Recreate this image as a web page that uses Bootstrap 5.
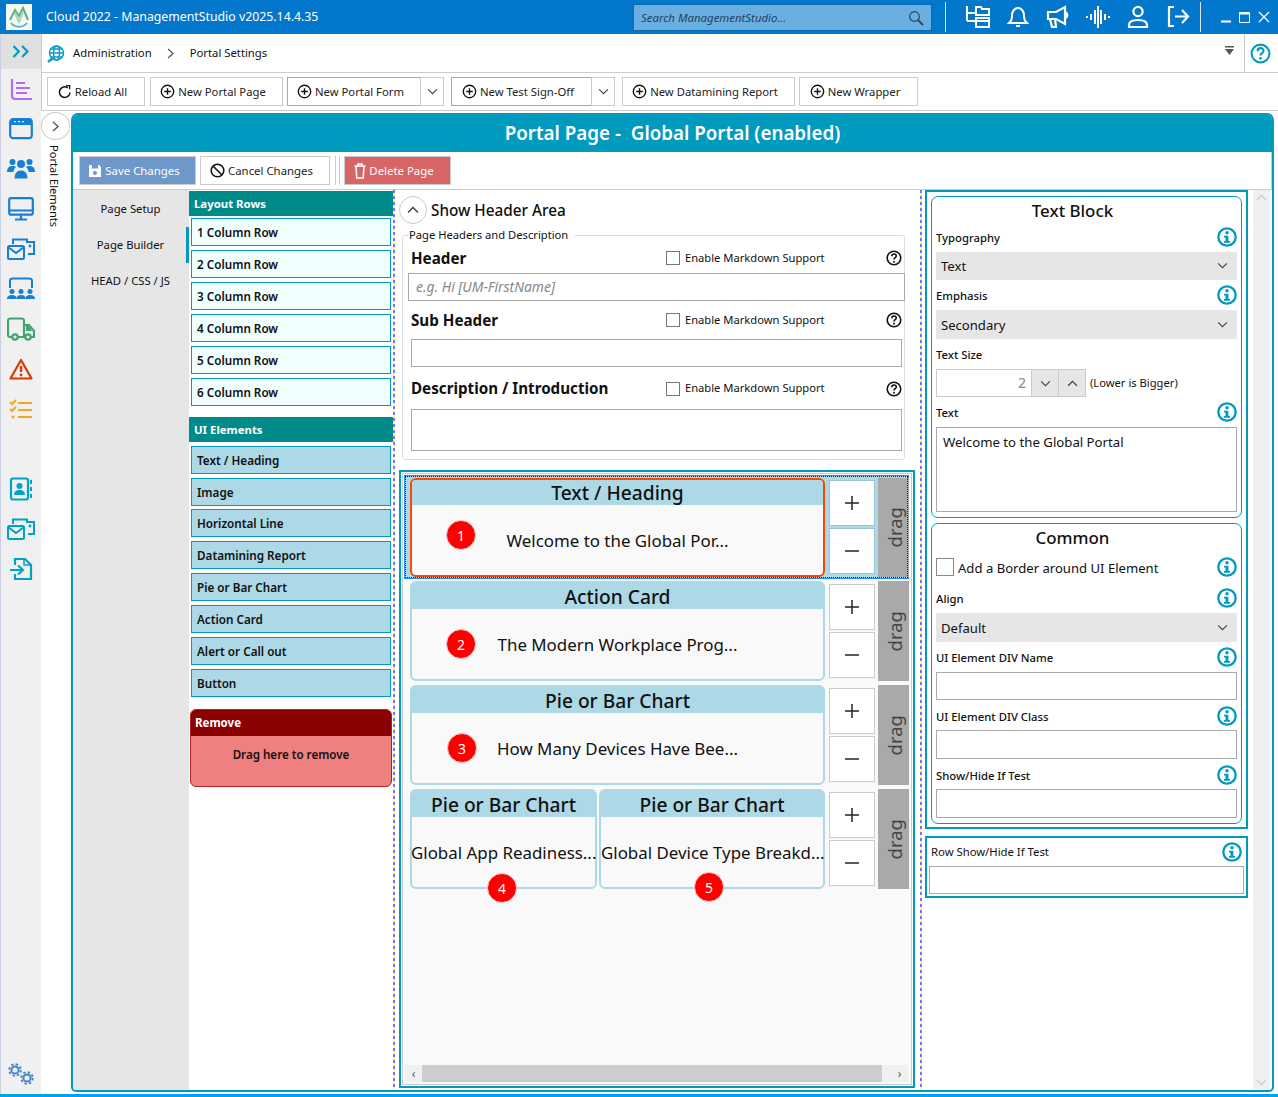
<!doctype html>
<html lang="en">
<head>
<meta charset="utf-8">
<title>ManagementStudio</title>
<link href="https://cdn.jsdelivr.net/npm/bootstrap@5.3.0/dist/css/bootstrap.min.css" rel="stylesheet">
<style>
html,body{height:100%;}
body{width:1278px;height:1097px;overflow:hidden;background:#fff;font-family:"Noto Sans","Open Sans",sans-serif;font-size:11.3px;color:#111;}
.app-shell{height:1094px;}
.title-bar{height:34px;background:#0277cc;color:#fff;flex:none;}
.logo-box{width:26px;height:26px;margin:4px 0 0 6px;background:#f4f8f4;}
.app-name{font-size:12.3px;margin-left:14px;width:587px;line-height:34px;white-space:nowrap;}
.search-box{width:299px;height:27px;margin-top:4px;background:#6aafe2;border:1px solid #0a68ad;padding:0 7px;color:#24435c;font-style:italic;font-size:11.4px;}
.sep-v{width:1px;height:30px;background:#d6e8f6;margin-top:2px;}
.sep-a{margin-left:13px;margin-right:12px;}
.sep-b{margin-left:2px;}
.tb-ico{display:flex;justify-content:center;align-items:center;width:40px;height:34px;}
.win-btns{width:76px;padding-left:20px;gap:8px;height:34px;}
.rail{width:41px;flex:none;background:#f0f0f0;border-left:1px solid #ccd0e4;}
.rail-top{height:35px;background:#e0e0e0;}
.rail-cell{height:40px;}
.rail-gap{height:40px;}
.rail-foot{margin-top:auto;height:40px;padding-left:5px;padding-bottom:8px;}
.crumb-bar{height:39px;border-bottom:1px solid #ccc;border-left:1px solid #ccc;flex:none;padding-left:5px;padding-top:1px;font-size:11.3px;}
.crumb-main{flex:1;}
.crumb-help{width:34px;border-left:1px solid #ccc;height:38px;padding-right:3px;margin-top:-1px;color:#009abf;}
.crumb-sep{margin:0 16px 0 15px;}
.filter-mark{margin-right:10px;margin-top:-6px;}
.tool-bar{height:38px;border-bottom:1px solid #ccc;border-left:1px solid #ccc;flex:none;padding:4px 0 0 5px;gap:4px;}
.tool-btn{--bs-btn-padding-x:0;--bs-btn-padding-y:0;--bs-btn-font-size:11.3px;--bs-btn-border-radius:0;--bs-btn-border-color:#ccc;--bs-btn-bg:#fff;--bs-btn-color:#222;--bs-btn-line-height:1;height:29px;display:flex;align-items:center;justify-content:center;gap:3px;white-space:nowrap;padding-right:7px;}
.tool-btn.w-reload{width:98px;margin-right:1px}.tool-btn.w-page{width:133px}.tool-btn.w-form{width:134px;--bs-btn-border-color:#aaa}.tool-btn.w-test{width:141px;--bs-btn-border-color:#aaa}.tool-btn.w-dm{width:173px}.tool-btn.w-wrap{width:119px}
.tool-btn.w-caret{width:24px;margin-left:-1px;--bs-btn-border-color:#ccc;padding-right:0;}
.split-gap{margin-left:3px;}
.side-strip{width:30px;flex:none;}
.round-btn{width:29px;height:28px;border:1px solid #ccc;border-radius:50%;background:#fff;padding:0;display:flex;align-items:center;justify-content:center;flex:none;}
.strip-btn{margin-top:1px;}
.strip-label{writing-mode:vertical-rl;font-size:11.1px;margin:5px 0 0 5px;line-height:16px;white-space:nowrap;}
.page-panel{width:1203px;height:979px;margin-top:2px;border:2px solid #009abf;border-radius:7px 7px 5px 5px;overflow:hidden;flex:none;background:#fff;}
.panel-head{height:37px;background:#009abf;color:#fff;font-size:18.8px;font-weight:600;text-align:center;line-height:37px;flex:none;white-space:pre;}
.action-bar{height:38px;border-bottom:1px solid #ccc;border-right:1px solid #ccc;padding:4px 0 0 6px;flex:none;gap:4px;}
.act-btn{--bs-btn-padding-x:0;--bs-btn-padding-y:0;--bs-btn-font-size:11.4px;--bs-btn-border-radius:0;--bs-btn-line-height:1;height:29px;display:flex;align-items:center;justify-content:center;gap:3px;white-space:nowrap;padding-right:7px;}
.act-save{width:117px;--bs-btn-bg:#6e98c9;--bs-btn-border-color:#ccc;--bs-btn-color:#fff;}
.act-cancel{width:130px;--bs-btn-bg:#fff;--bs-btn-border-color:#ccc;--bs-btn-color:#222;}
.act-del{width:107px;--bs-btn-bg:#d76565;--bs-btn-border-color:#ccc;--bs-btn-color:#fff;}
.bar-sep{width:5px;height:29px;border-left:1px solid #ccc;border-right:1px solid #ccc;margin-left:1px;}
.tabs-col{width:116px;background:#e6e6e6;flex:none;padding-top:1px;}
.tab-item{height:36px;display:flex;align-items:center;justify-content:center;font-size:11.3px;padding-right:1px;white-space:nowrap;}
.tab-on{box-shadow:inset -3px 0 0 #009abf;}
.tool-col{width:204px;flex:none;padding-top:1px;}
.sec-head{height:25px;color:#fff;font-weight:700;font-size:11.4px;line-height:25px;padding-left:5px;}
.sec-teal{background:#008b8b;}
.azure-list{margin-top:2px;}
.ui-head{margin-top:11px;margin-bottom:4px;}
.drag-item{display:block;height:28px;border:1px solid #009abf;margin:0 2px 4px;padding-left:5px;line-height:27px;font-weight:600;font-size:11.7px;white-space:nowrap;}
.item-azure{background:#f0ffff;}
.item-blue{background:#add8e6;}
.drag-item.tight-b{margin-bottom:3px;}
.remove-box{margin:12px 1px 0;border:1px solid #b22222;border-radius:6px;overflow:hidden;height:78px;background:#f08080;}
.remove-head{height:27px;background:#8b0000;color:#fff;font-weight:700;font-size:11.5px;line-height:28px;padding-left:5px;margin:-1px -1px 0;}
.remove-body{font-weight:600;font-size:11.6px;text-align:center;margin-top:10px;}
.dash-rule{width:2px;flex:none;background:repeating-linear-gradient(#7b74ff 0 3px,#ffff70 3px 6px);}
.mid-col{width:525px;flex:none;}
.show-row{height:45px;padding:6px 0 0 4px;font-size:15.3px;font-weight:500;gap:4px;flex:none;}
.show-btn{width:28px;}
.show-txt{line-height:28px;}
.fs-box{position:relative;margin:0 15px 0 7px;height:225px;flex:none;border:1px solid #d8e0e6;border-radius:3px;padding:0 2px 0 8px;}
.fs-legend{position:absolute;top:-10px;left:5px;background:#fff;padding:0 6px 0 1px;font-size:11.2px;line-height:17px;white-space:nowrap;}
.fs-row{align-items:center;}
.fs-title{width:256px;font-size:15.2px;font-weight:700;white-space:nowrap;}
.fs-check{width:14px;height:14px;border:1px solid #777;margin-right:5px;flex:none;}
.fs-md{width:202px;font-size:11.2px;white-space:nowrap;}
.hdr-input{display:block;height:28px;border:1px solid #aaa;background:#fff;font-size:13.9px;padding:0 7px;color:#888;font-style:italic;line-height:26px;}
.r1{height:37px;padding-top:7px;}
.i1{margin:0 -3px;}
.r2{height:38px;}
.r3{height:42px;padding-top:1px;}
.i3{height:42px;}
.canvas-outer{margin:10px 5px 2px 4px;flex:1;border:2px solid #009abf;padding:1px;min-height:0;}
.canvas-inner{height:100%;border:1px solid #ccc;background:#f9f9f9;padding:1px 0 0 1px;}
.row-sel{background:#add8e6;outline:1px dotted #222;outline-offset:-2px;border:1px solid #1e90ff;height:104px;margin:0 2px 2px 0;padding:2px 0 1px 5px;flex:none;}
.row-plain{height:100px;margin:0 0 4px;padding:0 0 0 6px;flex:none;}
.comp-card{position:relative;width:415px;height:100%;border:2px solid #add8e6;border-radius:6px;background:#f9f9f9;flex:none;}
.half-a{width:187px;margin-right:2px;}
.half-b{width:226px;}
.comp-sel{border-color:#ff4500;}
.comp-head{height:27px;background:#add8e6;text-align:center;font-size:19.2px;font-weight:500;line-height:29px;white-space:nowrap;margin:-1px -1px 0;border-radius:5px 5px 0 0;}
.comp-sel .comp-head{margin:0;border-radius:4px 4px 0 0;height:25px;line-height:25px;}
.comp-text{text-align:center;font-size:16.9px;white-space:nowrap;height:72px;line-height:72px;}
.half-a .comp-text{margin-left:-1px;}
.num-dot{position:absolute;width:30px;height:30px;border-radius:50%;background:#f00;color:#fff;border:1px solid #f3c9c9;font-size:14px;display:flex;align-items:center;justify-content:center;}
.d1{left:34px;top:40px}.d2{left:34px;top:46px}.d3{left:35px;top:46px}.d4{left:75px;top:82px}.d5{left:93px;top:81px}
.pm-col{width:46px;margin-left:4px;flex:none;gap:2px;padding-top:3px;}
.row-sel .pm-col{padding-top:2px;}
.pm-btn{--bs-btn-padding-x:0;--bs-btn-padding-y:0;--bs-btn-border-radius:0;--bs-btn-bg:#fff;--bs-btn-border-color:#ccc;width:46px;height:46px;display:flex;align-items:center;justify-content:center;}
.pm-blue{--bs-btn-border-color:#9cc6d8;}
.drag-bar{width:31px;margin-left:3px;background:#a9a9a9;color:#444;flex:none;font-size:18.5px;display:flex;align-items:center;justify-content:center;padding-left:3px;}
.drag-txt{writing-mode:vertical-rl;transform:rotate(180deg);line-height:1;}
.canvas-scroll{height:17px;margin:auto 3px 2px 1px;background:#f0f0f0;color:#555;align-items:center;flex:none;}
.scroll-thumb{flex:1;height:100%;background:#cdcdcd;margin-right:9px;}
.scroll-arrow{width:17px;text-align:center;font-size:12px;line-height:16px;}
.prop-col{width:331px;flex:none;padding-left:3px;}
.prop-box{border:2px solid #009abf;width:323px;padding:4px 4px 3px;}
.prop-card{border:1px solid #009abf;border-radius:7px;padding:0 4px;}
.card-a{height:322px;margin-bottom:5px;}
.card-b{height:301px;}
.prop-title{font-size:16.9px;font-weight:500;text-align:center;line-height:28px;height:28px;padding-right:28px;}
.prop-lbl{font-size:11.3px;font-weight:500;height:24px;margin-bottom:3px;align-items:center;white-space:nowrap;}
.prop-lbl span{padding-top:2px;}
.prop-lbl.tight{margin-bottom:2px;}
.info-i{flex:none;}
.sel-fake{height:28px;background:#e6e6e6;padding:2px 5px 0;font-size:13.1px;margin-bottom:3px;}
.sel-fake svg{margin-top:-3px;}
.sel-fake.tall{height:29px;}
.spin-wrap{height:28px;margin-bottom:3px;}
.spin-num{width:96px;height:28px;border:1px solid #ccc;background:#fff;text-align:right;padding-right:5px;line-height:26px;color:#888;font-size:14px;}
.spin-btn{width:28px;height:28px;background:#e6e6e6;border:1px solid #ccc;margin-left:-1px;padding:0;display:flex;align-items:center;justify-content:center;}
.spin-note{font-size:11.2px;margin-left:4px;}
.text-fake{height:85px;border:1px solid #aaa;padding:5px 6px;font-size:13.2px;}
.plain-field{height:29px;border:1px solid #aaa;background:#fff;}
.plain-field.short{height:28px;}
.mb-gap{margin-bottom:4px;}
.border-row{height:30px;font-size:13.1px;margin-bottom:4px;}
.border-txt{padding-top:3px;}
.border-check{width:18px;height:18px;border:1px solid #888;flex:none;}
.row-box{height:62px;margin-top:7px;padding:2px;}
.row-lbl{height:24px;margin-bottom:2px;font-size:11.3px;align-items:center;padding:0 2px;}
.vscroll{width:17px;flex:none;background:#f0f0f0;color:#ccc;}
.bottom-line{height:3px;background:#00a2ed;flex:none;}
.main-col{min-width:0;flex:1;}
.body-row{min-height:0;flex:1;}
</style>
</head>
<body>
<svg width="0" height="0" class="d-none" aria-hidden="true">
<defs>
<symbol id="i-plus" viewBox="0 0 16 16"><circle cx="8" cy="8" r="6.6" fill="none" stroke="#111" stroke-width="1.5"/><path d="M8 4.5v7M4.5 8h7" stroke="#111" stroke-width="1.5"/></symbol>
<symbol id="i-help" viewBox="0 0 16 16"><circle cx="8" cy="8" r="6.8" fill="none" stroke="currentColor" stroke-width="1.6"/><path d="M5.8 6.2c0-3 4.5-3 4.5-.2 0 1.7-2.3 1.8-2.3 3.6" fill="none" stroke="currentColor" stroke-width="1.6"/><circle cx="8" cy="11.7" r="1" fill="currentColor"/></symbol>
<symbol id="i-info" viewBox="0 0 20 20"><circle cx="10" cy="10" r="8.7" fill="none" stroke="#009abf" stroke-width="2.300"/><circle cx="10" cy="5.800" r="1.700" fill="#009abf"/><path d="M7 8.700h4.400v5.300h1.600v1.700H7V14h1.500v-3.600H7z" fill="#009abf"/></symbol>
<symbol id="i-chev-d" viewBox="0 0 12 8"><path d="M1 1.5l5 5 5-5" fill="none" stroke="#444" stroke-width="1.3"/></symbol>
<symbol id="i-chev-u" viewBox="0 0 12 8"><path d="M1 6.5l5-5 5 5" fill="none" stroke="#444" stroke-width="1.5"/></symbol>
<symbol id="i-mail" viewBox="0 0 28 24"><g fill="none" stroke="currentColor" stroke-width="2"><path d="M6 7V2.500h14V6M20 5h7v12h-6"/><rect x="1" y="9" width="16" height="13" rx="1.500"/><path d="M1 10l8 6 8-6"/></g><circle cx="23" cy="9" r="1.400" fill="currentColor"/></symbol>
<symbol id="i-add" viewBox="0 0 14 14"><path d="M7 0v14M0 7h14" stroke="#222" stroke-width="1.500"/></symbol>
<symbol id="i-sub" viewBox="0 0 14 14"><path d="M0 7h14" stroke="#222" stroke-width="1.500"/></symbol>
</defs>
</svg>
<div class="app-shell d-flex flex-column">
  <header class="title-bar d-flex">
    <div class="logo-box d-flex align-items-center justify-content-center">
      <svg width="24" height="24" viewBox="0 0 24 24"><path d="M3 15l5-10 4 6 4-8 5 12" fill="none" stroke="#5fb37f" stroke-width="2"/><path d="M4 18c4 5 12 5 16 0" fill="none" stroke="#5ab0cc" stroke-width="2"/><path d="M8 8l4 9 4-10" fill="none" stroke="#a5d6b5" stroke-width="2"/></svg>
    </div>
    <div class="app-name">Cloud 2022 - ManagementStudio v2025.14.4.35</div>
    <div class="search-box d-flex align-items-center justify-content-between">
      <span>Search ManagementStudio...</span>
      <svg width="16" height="16" viewBox="0 0 16 16"><circle cx="6.500" cy="6.500" r="4.800" fill="none" stroke="#345" stroke-width="1.200"/><path d="M10 10l5 5" stroke="#345" stroke-width="1.800"/></svg>
    </div>
    <div class="sep-v sep-a"></div>
    <div class="tb-ico"><svg width="26" height="24" viewBox="0 0 26 24" fill="none" stroke="#fff" stroke-width="2"><path d="M2 1v15M2 8h9M2 16h9"/><path d="M11 2h5l1 2h7v6H11z"/><path d="M11 13h13v9H11z"/><path d="M11 16h13"/></svg></div>
    <div class="tb-ico"><svg width="22" height="24" viewBox="0 0 22 24" fill="none" stroke="#fff" stroke-width="2"><path d="M2 18h18c-2-2-3-3-3-8 0-4-3-7-6-7s-6 3-6 7c0 5-1 6-3 8z"/><path d="M9 21h4"/></svg></div>
    <div class="tb-ico"><svg width="24" height="24" viewBox="0 0 24 24" fill="none" stroke="#fff" stroke-width="2.200"><path d="M2 7h8l9-5v17l-9-5H2z"/><path d="M4 14l2 8h4l-1-8M19 7c3 1 3 5 0 6"/></svg></div>
    <div class="tb-ico"><svg width="26" height="24" viewBox="0 0 26 24" stroke="#fff" stroke-width="2"><path d="M2 11v2M6 9v6M10 5v14M13 1v22M16 5v14M20 9v6M24 11v2"/></svg></div>
    <div class="tb-ico"><svg width="22" height="24" viewBox="0 0 22 24" fill="none" stroke="#fff" stroke-width="2.200"><circle cx="11" cy="6.500" r="4.600"/><path d="M2 22v-2c0-3 3-5 9-5s9 2 9 5v2z"/></svg></div>
    <div class="tb-ico"><svg width="24" height="24" viewBox="0 0 24 24" fill="none" stroke="#fff" stroke-width="2.200"><path d="M8 2H3v19h5"/><path d="M9 11.500h13M16 5l6 6.500-6 6.500"/></svg></div>
    <div class="sep-v sep-b"></div>
    <div class="win-btns d-flex align-items-center">
      <svg width="10" height="12" viewBox="0 0 10 12"><path d="M0 10.500h10" stroke="#fff" stroke-width="2"/></svg>
      <svg width="11" height="11" viewBox="0 0 11 11"><path d="M.5.500h10v10H.500z" fill="none" stroke="#fff"/><path d="M0 1.500h11" stroke="#fff" stroke-width="2"/></svg>
      <svg width="12" height="12" viewBox="0 0 12 12"><path d="M1 1l10 10M11 1L1 11" stroke="#fff" stroke-width="1.200"/></svg>
    </div>
  </header>
  <div class="d-flex body-row">
    <nav class="rail d-flex flex-column">
      <div class="rail-top d-flex align-items-center justify-content-center"><svg width="20" height="13" viewBox="0 0 18 12" fill="none" stroke="#009abf" stroke-width="2"><path d="M2 1l5 5-5 5M10 1l5 5-5 5"/></svg></div>
      <div class="rail-cell d-flex align-items-center justify-content-center"><svg width="24" height="24" viewBox="0 0 24 24" fill="none" stroke="#b26cf0" stroke-width="2.200"><path d="M3 2v17c0 2 1 3 3 3h17"/><path d="M7 6h9M7 11h14M7 16h11"/></svg></div>
      <div class="rail-cell d-flex align-items-center justify-content-center"><svg width="24" height="22" viewBox="0 0 24 22"><rect x="1.200" y="1.200" width="21.600" height="19" rx="3" fill="none" stroke="#1680d6" stroke-width="2.200"/><path d="M1 3.500c0-2 1-3 3-3h16c2 0 3 1 3 3V7H1z" fill="#1680d6"/><path d="M5 3.600h2M9 3.600h2M13 3.600h2" stroke="#fff" stroke-width="1.400"/></svg></div>
      <div class="rail-cell d-flex align-items-center justify-content-center"><svg width="28" height="24" viewBox="0 0 28 24" fill="#1680d6"><circle cx="14" cy="7" r="4"/><circle cx="5.500" cy="5" r="3"/><circle cx="22.500" cy="5" r="3"/><path d="M0 15c0-4 2-6 5.500-6 1.500 0 2.500.4 3.500 1-1.500 1-2.500 3-2.500 5H0zM28 15c0-4-2-6-5.500-6-1.500 0-2.500.4-3.500 1 1.500 1 2.500 3 2.500 5H28z"/><path d="M7 22c0-6 3-9 7-9s7 3 7 9z" stroke="#f0f0f0" stroke-width="1"/></svg></div>
      <div class="rail-cell d-flex align-items-center justify-content-center"><svg width="26" height="24" viewBox="0 0 26 24" fill="none" stroke="#1680d6" stroke-width="2.200"><rect x="1.200" y="1.200" width="23.600" height="16.500" rx="2"/><path d="M1 13.500h24M13 18v4M7 22.500h12"/></svg></div>
      <div class="rail-cell d-flex align-items-center justify-content-center"><svg width="28" height="24"><use href="#i-mail" color="#1680d6"/></svg></div>
      <div class="rail-cell d-flex align-items-center justify-content-center"><svg width="28" height="24" viewBox="0 0 28 24" fill="#1680d6"><path d="M3 11V4c0-1.500 1-2.500 2.500-2.500h17C24 1.500 25 2.500 25 4v7" fill="none" stroke="#1680d6" stroke-width="2"/><circle cx="5" cy="14.500" r="2.500"/><circle cx="14" cy="14.500" r="2.500"/><circle cx="23" cy="14.500" r="2.500"/><path d="M0 22c0-3 2-4 5-4s4.500 1 4.500 4zM9.500 22c0-3 1.500-4 4.500-4s4.500 1 4.500 4zM18.500 22c0-3 1.500-4 4.500-4s5 1 5 4z"/></svg></div>
      <div class="rail-cell d-flex align-items-center justify-content-center"><svg width="28" height="24" viewBox="0 0 28 24" fill="none" stroke="#3fa66d" stroke-width="2.200"><path d="M5 20H3c-1 0-2-1-2-2V4c0-1.500 1-2.500 2.500-2.500h11C16 1.500 17 2.500 17 4v16H11"/><circle cx="8" cy="20" r="2.700"/><circle cx="21" cy="20" r="2.700"/><path d="M17 8h5l5 6v6h-3"/><path d="M19 9h3l3 5h-6z" fill="#3fa66d" stroke="none"/></svg></div>
      <div class="rail-cell d-flex align-items-center justify-content-center"><svg width="24" height="22" viewBox="0 0 24 22"><path d="M12 2L1.500 20.500h21z" fill="none" stroke="#d83b01" stroke-width="2.200" stroke-linejoin="round"/><path d="M12 8v6" stroke="#d83b01" stroke-width="2.400"/><circle cx="12" cy="17" r="1.400" fill="#d83b01"/></svg></div>
      <div class="rail-cell d-flex align-items-center justify-content-center"><svg width="24" height="20" viewBox="0 0 24 20" fill="none" stroke="#f3a71f" stroke-width="2"><path d="M1 3l2 2 4-4M1 10l2 2 4-4M9 4h14M9 11h14M9 18h14"/><circle cx="4" cy="18" r="1.500" fill="#f3a71f" stroke="none"/></svg></div>
      <div class="rail-gap"></div>
      <div class="rail-cell d-flex align-items-center justify-content-center"><svg width="24" height="24" viewBox="0 0 24 24"><rect x="2" y="1.500" width="17" height="21" rx="2" fill="none" stroke="#00a3c4" stroke-width="2.200"/><circle cx="10.500" cy="9" r="3" fill="#00a3c4"/><path d="M5 18c0-3 2-5 5.500-5s5.500 2 5.500 5z" fill="#00a3c4"/><path d="M22 3v4M22 10v4M22 17v4" stroke="#00a3c4" stroke-width="2"/></svg></div>
      <div class="rail-cell d-flex align-items-center justify-content-center"><svg width="28" height="24"><use href="#i-mail" color="#00a3c4"/></svg></div>
      <div class="rail-cell d-flex align-items-center justify-content-center"><svg width="24" height="24" viewBox="0 0 24 24" fill="none" stroke="#00a3c4" stroke-width="2.200"><path d="M6 8V2h10l6 6v14H6v-5"/><path d="M15 2v6h7" stroke-width="1.500"/><path d="M1 13h12M9 8.500l5 4.500-5 4.500"/></svg></div>
      <div class="rail-foot d-flex align-items-end"><svg width="30" height="24" viewBox="0 0 30 24" fill="none" stroke="#3f83c8" stroke-width="2"><circle cx="9" cy="8" r="3.600"/><circle cx="9" cy="8" r="5.800" stroke-width="1.800" stroke-dasharray="2.400 2.150"/><circle cx="21" cy="16" r="3.600"/><circle cx="21" cy="16" r="5.800" stroke-width="1.800" stroke-dasharray="2.400 2.150"/></svg></div>
    </nav>
    <div class="main-col d-flex flex-column">
      <div class="crumb-bar d-flex align-items-center">
        <svg class="me-2" width="18" height="18" viewBox="0 0 18 18" fill="none" stroke="#0f9cc4" stroke-width="1.500"><circle cx="9.500" cy="8" r="7"/><ellipse cx="9.500" cy="8" rx="3" ry="7"/><path d="M2.500 8h14M3.500 4h12M3.500 12h12"/><path d="M1 17l5-4" stroke-width="2.500"/></svg>
        <div class="crumb-main d-flex align-items-center">
          <span>Administration</span>
          <svg class="crumb-sep" width="7" height="11" viewBox="0 0 7 11"><path d="M1 1l5 4.500-5 4.500" fill="none" stroke="#555" stroke-width="1.200"/></svg>
          <span>Portal Settings</span>
          <svg class="ms-auto filter-mark" width="9" height="10" viewBox="0 0 9 10"><path d="M0 0h9v1.500H0zM0 3h9L4.500 9z" fill="#555"/></svg>
        </div>
        <div class="crumb-help d-flex align-items-center justify-content-center"><svg width="21" height="21"><use href="#i-help"/></svg></div>
      </div>
      <div class="tool-bar d-flex">
        <button class="btn tool-btn w-reload"><svg width="14" height="14" viewBox="0 0 14 14" fill="none" stroke="#111" stroke-width="1.500"><path d="M12 7.500A5.300 5.300 0 1 1 9.800 2.800"/><path d="M8 .5h3.700v3.700" stroke-width="1.300"/></svg>Reload All</button>
        <button class="btn tool-btn w-page"><svg width="15" height="15"><use href="#i-plus"/></svg>New Portal Page</button>
        <div class="d-flex"><button class="btn tool-btn w-form"><svg width="15" height="15"><use href="#i-plus"/></svg>New Portal Form</button><button class="btn tool-btn w-caret"><svg width="11" height="7"><use href="#i-chev-d"/></svg></button></div>
        <div class="d-flex split-gap"><button class="btn tool-btn w-test"><svg width="15" height="15"><use href="#i-plus"/></svg>New Test Sign-Off</button><button class="btn tool-btn w-caret"><svg width="11" height="7"><use href="#i-chev-d"/></svg></button></div>
        <button class="btn tool-btn w-dm split-gap"><svg width="15" height="15"><use href="#i-plus"/></svg>New Datamining Report</button>
        <button class="btn tool-btn w-wrap"><svg width="15" height="15"><use href="#i-plus"/></svg>New Wrapper</button>
      </div>
      <div class="d-flex body-row">
        <aside class="side-strip d-flex flex-column align-items-start">
          <button class="round-btn strip-btn"><svg width="7" height="11" viewBox="0 0 7 11"><path d="M1 1l5 4.500-5 4.500" fill="none" stroke="#555" stroke-width="1.400"/></svg></button>
          <div class="strip-label">Portal Elements</div>
        </aside>
        <section class="page-panel d-flex flex-column">
          <div class="panel-head">Portal Page -  Global Portal (enabled)</div>
          <div class="action-bar d-flex">
            <button class="btn act-btn act-save"><svg width="14" height="14" viewBox="0 0 14 14"><path d="M1 1h10l2 2v10H1z" fill="#fff"/><path d="M4 1h6v3.500H4z" fill="#6e98c9"/><circle cx="7" cy="9" r="2" fill="#6e98c9"/></svg>Save Changes</button>
            <button class="btn act-btn act-cancel"><svg width="15" height="15" viewBox="0 0 15 15" fill="none" stroke="#111" stroke-width="1.600"><circle cx="7.500" cy="7.500" r="6.300"/><path d="M3 3l9 9"/></svg>Cancel Changes</button>
            <div class="bar-sep"></div>
            <button class="btn act-btn act-del"><svg width="12" height="16" viewBox="0 0 12 16" fill="none" stroke="#fff" stroke-width="1.500"><path d="M.5 3h11M4 3V1h4v2M2 3l.8 12h6.400L10 3"/></svg>Delete Page</button>
          </div>
          <div class="d-flex body-row">
            <div class="tabs-col">
              <div class="tab-item">Page Setup</div>
              <div class="tab-item tab-on">Page Builder</div>
              <div class="tab-item">HEAD / CSS / JS</div>
            </div>
            <div class="tool-col">
              <div class="sec-head sec-teal">Layout Rows</div>
              <div class="azure-list">
                <span class="drag-item item-azure">1 Column Row</span>
                <span class="drag-item item-azure">2 Column Row</span>
                <span class="drag-item item-azure">3 Column Row</span>
                <span class="drag-item item-azure">4 Column Row</span>
                <span class="drag-item item-azure">5 Column Row</span>
                <span class="drag-item item-azure">6 Column Row</span>
              </div>
              <div class="sec-head sec-teal ui-head">UI Elements</div>
              <span class="drag-item item-blue">Text / Heading</span>
              <span class="drag-item item-blue tight-b">Image</span>
              <span class="drag-item item-blue">Horizontal Line</span>
              <span class="drag-item item-blue">Datamining Report</span>
              <span class="drag-item item-blue">Pie or Bar Chart</span>
              <span class="drag-item item-blue">Action Card</span>
              <span class="drag-item item-blue">Alert or Call out</span>
              <span class="drag-item item-blue">Button</span>
              <div class="remove-box">
                <div class="remove-head">Remove</div>
                <div class="remove-body">Drag here to remove</div>
              </div>
            </div>
            <div class="dash-rule"></div>
            <div class="mid-col d-flex flex-column">
              <div class="show-row d-flex align-items-start">
                <button class="round-btn show-btn"><svg width="12" height="8"><use href="#i-chev-u"/></svg></button>
                <span class="show-txt">Show Header Area</span>
              </div>
              <div class="fs-box">
                <div class="fs-legend">Page Headers and Description</div>
                <div class="d-flex fs-row r1"><div class="fs-title">Header</div><div class="fs-check"></div><div class="fs-md">Enable Markdown Support</div><svg width="16" height="16"><use href="#i-help"/></svg></div>
                <div class="hdr-input i1">e.g. Hi [UM-FirstName]</div>
                <div class="d-flex fs-row r2"><div class="fs-title">Sub Header</div><div class="fs-check"></div><div class="fs-md">Enable Markdown Support</div><svg width="16" height="16"><use href="#i-help"/></svg></div>
                <div class="hdr-input"></div>
                <div class="d-flex fs-row r3"><div class="fs-title">Description / Introduction</div><div class="fs-check"></div><div class="fs-md">Enable Markdown Support</div><svg width="16" height="16"><use href="#i-help"/></svg></div>
                <div class="hdr-input i3"></div>
              </div>
              <div class="canvas-outer">
                <div class="canvas-inner d-flex flex-column">
                  <div class="row-sel d-flex">
                    <div class="comp-card comp-sel"><div class="comp-head">Text / Heading</div><div class="comp-text">Welcome to the Global Por...</div><span class="num-dot d1">1</span></div>
                    <div class="pm-col d-flex flex-column"><button class="btn pm-btn pm-blue"><svg width="14" height="14"><use href="#i-add"/></svg></button><button class="btn pm-btn pm-blue"><svg width="14" height="14"><use href="#i-sub"/></svg></button></div>
                    <div class="drag-bar"><span class="drag-txt">drag</span></div>
                  </div>
                  <div class="row-plain d-flex">
                    <div class="comp-card"><div class="comp-head">Action Card</div><div class="comp-text">The Modern Workplace Prog...</div><span class="num-dot d2">2</span></div>
                    <div class="pm-col d-flex flex-column"><button class="btn pm-btn"><svg width="14" height="14"><use href="#i-add"/></svg></button><button class="btn pm-btn"><svg width="14" height="14"><use href="#i-sub"/></svg></button></div>
                    <div class="drag-bar"><span class="drag-txt">drag</span></div>
                  </div>
                  <div class="row-plain d-flex">
                    <div class="comp-card"><div class="comp-head">Pie or Bar Chart</div><div class="comp-text">How Many Devices Have Bee...</div><span class="num-dot d3">3</span></div>
                    <div class="pm-col d-flex flex-column"><button class="btn pm-btn"><svg width="14" height="14"><use href="#i-add"/></svg></button><button class="btn pm-btn"><svg width="14" height="14"><use href="#i-sub"/></svg></button></div>
                    <div class="drag-bar"><span class="drag-txt">drag</span></div>
                  </div>
                  <div class="row-plain d-flex">
                    <div class="comp-card half-a"><div class="comp-head">Pie or Bar Chart</div><div class="comp-text">Global App Readiness...</div><span class="num-dot d4">4</span></div>
                    <div class="comp-card half-b"><div class="comp-head">Pie or Bar Chart</div><div class="comp-text">Global Device Type Breakd...</div><span class="num-dot d5">5</span></div>
                    <div class="pm-col d-flex flex-column"><button class="btn pm-btn"><svg width="14" height="14"><use href="#i-add"/></svg></button><button class="btn pm-btn"><svg width="14" height="14"><use href="#i-sub"/></svg></button></div>
                    <div class="drag-bar"><span class="drag-txt">drag</span></div>
                  </div>
                  <div class="canvas-scroll d-flex">
                    <div class="scroll-arrow">&#8249;</div>
                    <div class="scroll-thumb"></div>
                    <div class="scroll-arrow">&#8250;</div>
                  </div>
                </div>
              </div>
            </div>
            <div class="dash-rule"></div>
            <div class="prop-col">
              <div class="prop-box">
                <div class="prop-card card-a">
                  <div class="prop-title">Text Block</div>
                  <div class="d-flex prop-lbl justify-content-between"><span>Typography</span><svg class="info-i" width="20" height="20"><use href="#i-info"/></svg></div>
                  <div class="sel-fake d-flex align-items-center justify-content-between"><span>Text</span><svg width="11" height="7" class="me-1"><use href="#i-chev-d"/></svg></div>
                  <div class="d-flex prop-lbl justify-content-between"><span>Emphasis</span><svg class="info-i" width="20" height="20"><use href="#i-info"/></svg></div>
                  <div class="sel-fake tall d-flex align-items-center justify-content-between"><span>Secondary</span><svg width="11" height="7" class="me-1"><use href="#i-chev-d"/></svg></div>
                  <div class="d-flex prop-lbl"><span>Text Size</span></div>
                  <div class="d-flex align-items-center spin-wrap"><div class="spin-num">2</div><button class="spin-btn"><svg width="11" height="7"><use href="#i-chev-d"/></svg></button><button class="spin-btn"><svg width="11" height="7"><use href="#i-chev-u"/></svg></button><span class="spin-note">(Lower is Bigger)</span></div>
                  <div class="d-flex prop-lbl justify-content-between"><span>Text</span><svg class="info-i" width="20" height="20"><use href="#i-info"/></svg></div>
                  <div class="text-fake">Welcome to the Global Portal</div>
                </div>
                <div class="prop-card card-b">
                  <div class="prop-title">Common</div>
                  <div class="d-flex align-items-center border-row justify-content-between"><span class="d-flex align-items-center gap-1"><span class="border-check"></span><span class="border-txt">Add a Border around UI Element</span></span><svg class="info-i" width="20" height="20"><use href="#i-info"/></svg></div>
                  <div class="d-flex prop-lbl justify-content-between"><span>Align</span><svg class="info-i" width="20" height="20"><use href="#i-info"/></svg></div>
                  <div class="sel-fake tall d-flex align-items-center justify-content-between"><span>Default</span><svg width="11" height="7" class="me-1"><use href="#i-chev-d"/></svg></div>
                  <div class="d-flex prop-lbl justify-content-between"><span>UI Element DIV Name</span><svg class="info-i" width="20" height="20"><use href="#i-info"/></svg></div>
                  <div class="plain-field short mb-gap"></div>
                  <div class="d-flex prop-lbl tight justify-content-between"><span>UI Element DIV Class</span><svg class="info-i" width="20" height="20"><use href="#i-info"/></svg></div>
                  <div class="plain-field mb-gap"></div>
                  <div class="d-flex prop-lbl tight justify-content-between"><span>Show/Hide If Test</span><svg class="info-i" width="20" height="20"><use href="#i-info"/></svg></div>
                  <div class="plain-field"></div>
                </div>
              </div>
              <div class="prop-box row-box">
                <div class="d-flex row-lbl justify-content-between"><span>Row Show/Hide If Test</span><svg class="info-i" width="20" height="20"><use href="#i-info"/></svg></div>
                <div class="plain-field short"></div>
              </div>
            </div>
            <div class="vscroll d-flex flex-column justify-content-between align-items-center py-1">
              <svg width="11" height="7"><path d="M1 6l4.500-4.500L10 6" fill="none" stroke="#ccc" stroke-width="1.300"/></svg>
              <svg width="11" height="7"><path d="M1 1l4.500 4.500L10 1" fill="none" stroke="#ccc" stroke-width="1.300"/></svg>
            </div>
          </div>
        </section>
      </div>
    </div>
  </div>
</div>
<div class="bottom-line"></div>
</body>
</html>
